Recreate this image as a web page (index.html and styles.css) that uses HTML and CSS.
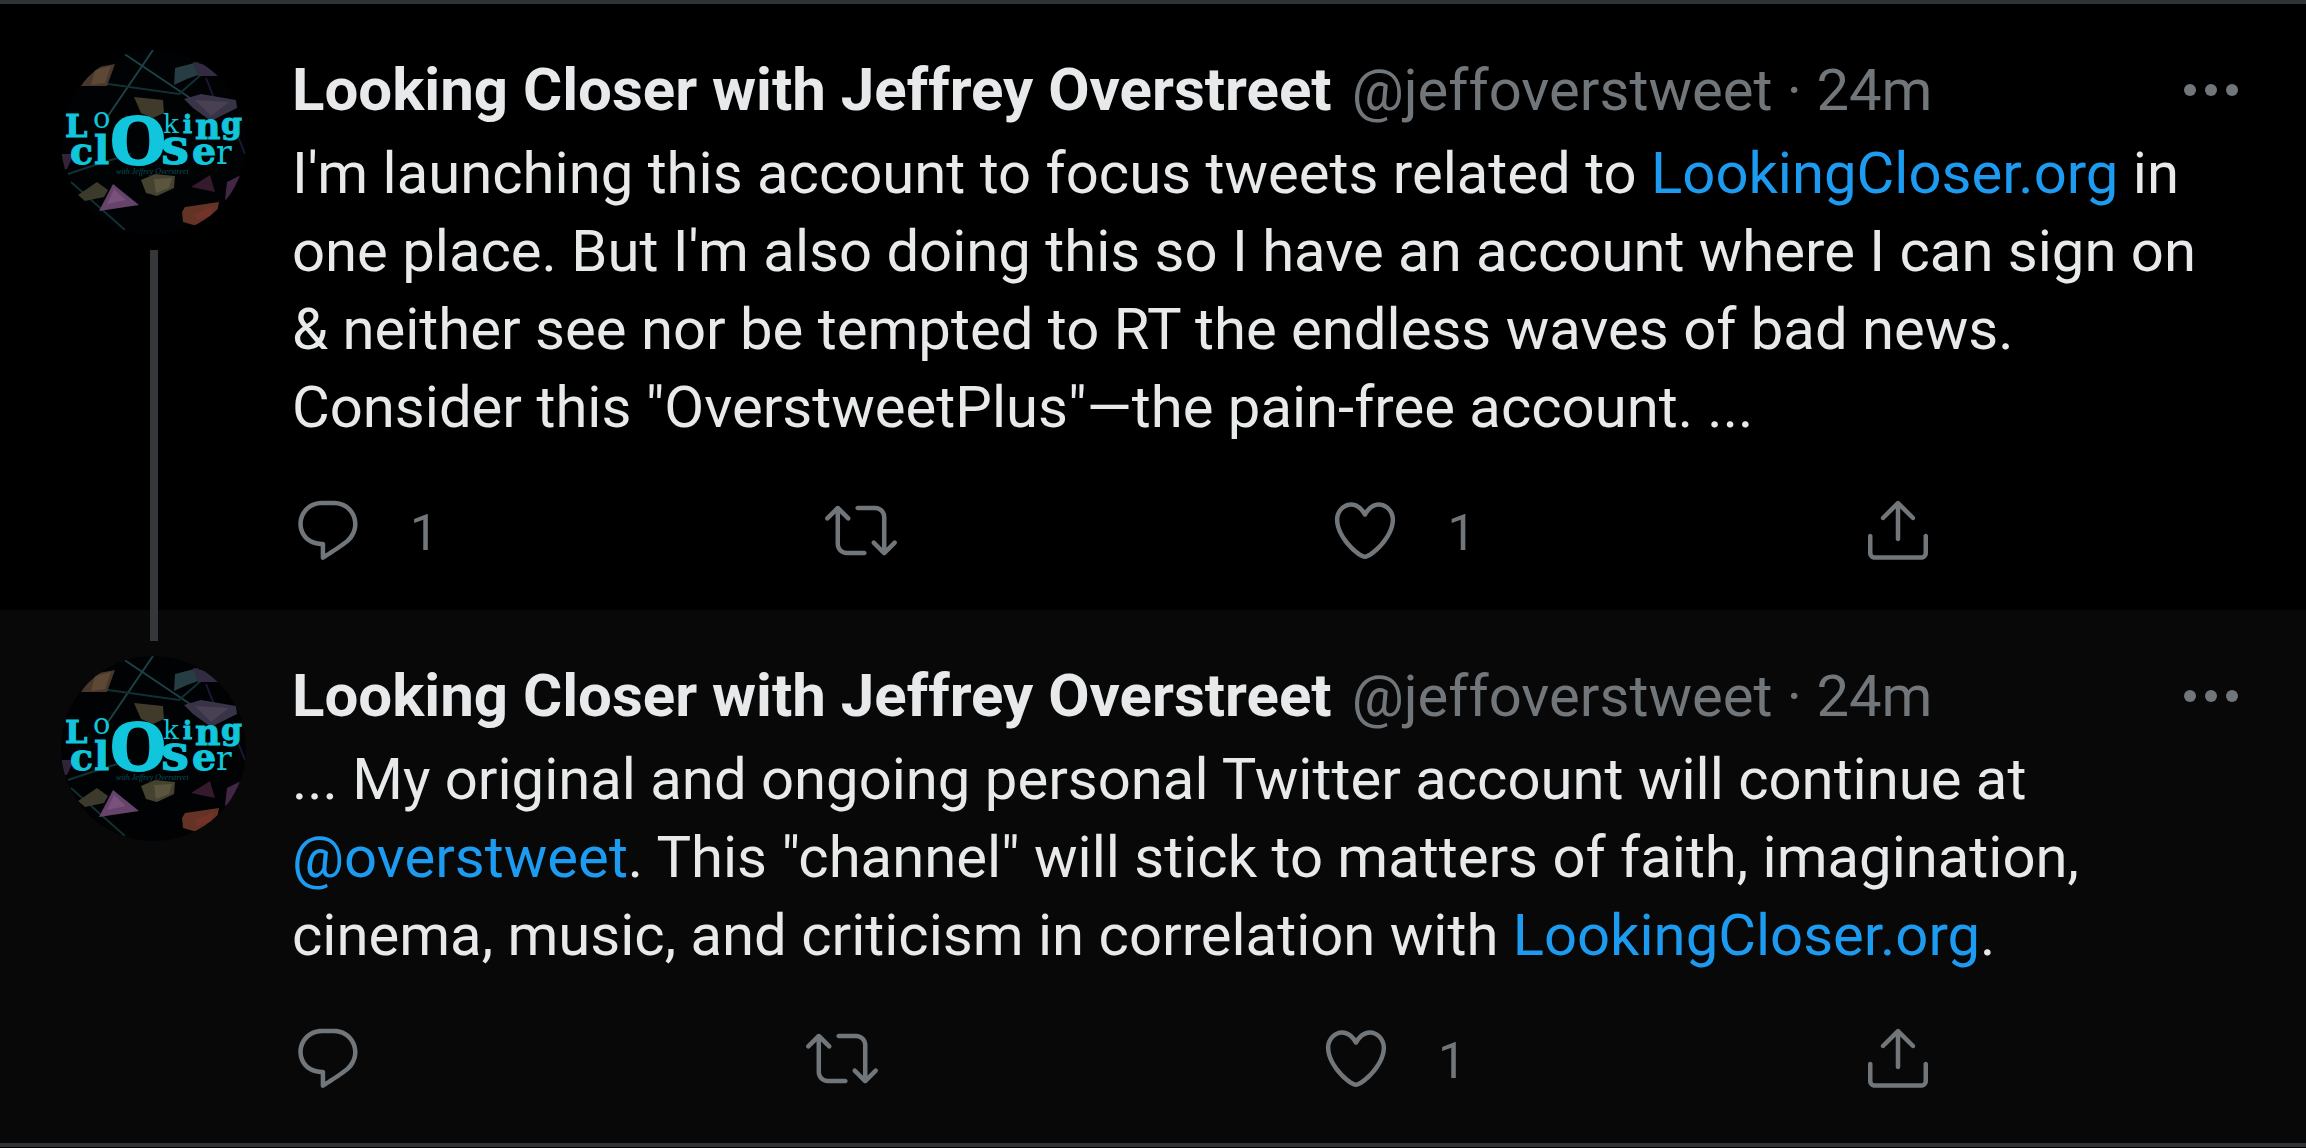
FILE: index.html
```
<!DOCTYPE html>
<html lang="en">
<head>
  <meta charset="UTF-8">
  <meta name="viewport" content="width=device-width, initial-scale=1.0">
  <title>Looking Closer with Jeffrey Overstreet</title>
  <link rel="stylesheet" href="styles.css">
</head>
<body>
  <!-- shared icons -->
  <svg class="sprite" aria-hidden="true">
    <symbol id="icon-reply" viewBox="0 0 24 24">
      <path d="M14.046 2.242l-4.148-.01h-.002c-4.374 0-7.8 3.427-7.8 7.802 0 4.098 3.186 7.206 7.465 7.37v3.828c0 .108.044.286.12.403.142.225.384.347.632.347.138 0 .277-.038.402-.118.264-.168 6.473-4.14 8.088-5.506 1.902-1.61 3.04-3.97 3.043-6.312v-.017c-.006-4.367-3.43-7.787-7.8-7.788zm3.787 12.972c-1.134.96-4.862 3.405-6.772 4.643V16.67c0-.414-.335-.75-.75-.75h-.396c-3.66 0-6.318-2.476-6.318-5.886 0-3.534 2.768-6.302 6.3-6.302l4.147.01h.002c3.532 0 6.3 2.766 6.302 6.296-.003 1.91-.942 3.844-2.514 5.176z"/>
    </symbol>
    <symbol id="icon-retweet" viewBox="0 0 24 24">
      <path d="M23.77 15.67c-.292-.293-.767-.293-1.06 0l-2.22 2.22V7.65c0-2.068-1.683-3.75-3.75-3.75h-5.85c-.414 0-.75.336-.75.75s.336.75.75.75h5.85c1.24 0 2.25 1.01 2.25 2.25v10.24l-2.22-2.22c-.293-.293-.768-.293-1.06 0s-.294.768 0 1.06l3.5 3.5c.145.147.337.22.53.22s.383-.072.53-.22l3.5-3.5c.294-.292.294-.767 0-1.06zm-10.66 3.28H7.26c-1.24 0-2.25-1.01-2.25-2.25V6.46l2.22 2.22c.148.147.34.22.532.22s.384-.073.53-.22c.293-.293.293-.768 0-1.06l-3.5-3.5c-.293-.294-.768-.294-1.06 0l-3.5 3.5c-.294.292-.294.767 0 1.06s.767.293 1.06 0l2.22-2.22V16.7c0 2.068 1.683 3.75 3.75 3.75h5.85c.414 0 .75-.336.75-.75s-.337-.75-.75-.75z"/>
    </symbol>
    <symbol id="icon-like" viewBox="0 0 24 24">
      <path d="M12 21.638h-.014C9.403 21.59 1.95 14.856 1.95 8.478c0-3.064 2.525-5.754 5.403-5.754 2.29 0 3.83 1.58 4.646 2.73.814-1.148 2.354-2.73 4.645-2.73 2.88 0 5.404 2.69 5.404 5.755 0 6.376-7.454 13.11-10.037 13.157H12zM7.354 4.225c-2.08 0-3.903 1.988-3.903 4.255 0 5.74 7.034 11.596 8.55 11.658 1.518-.062 8.55-5.917 8.55-11.658 0-2.267-1.823-4.255-3.903-4.255-2.528 0-3.94 2.936-3.952 2.965-.23.562-1.156.562-1.387 0-.014-.03-1.425-2.965-3.954-2.965z"/>
    </symbol>
    <symbol id="icon-share" viewBox="0 0 24 24">
      <path d="M17.53 7.47l-5-5c-.293-.293-.768-.293-1.06 0l-5 5c-.294.293-.294.768 0 1.06s.767.294 1.06 0l3.72-3.72V15c0 .414.336.75.75.75s.75-.336.75-.75V4.81l3.72 3.72c.146.147.338.22.53.22s.384-.072.53-.22c.293-.293.293-.767 0-1.06z"/>
      <path d="M19.708 21.944H4.292C3.028 21.944 2 20.916 2 19.652V14c0-.414.336-.75.75-.75s.75.336.75.75v5.652c0 .437.355.792.792.792h15.416c.437 0 .792-.355.792-.792V14c0-.414.336-.75.75-.75s.75.336.75.75v5.652c0 1.264-1.028 2.292-2.292 2.292z"/>
    </symbol>
    <symbol id="icon-more" viewBox="0 0 24 24">
      <circle cx="5" cy="12" r="2"/>
      <circle cx="12" cy="12" r="2"/>
      <circle cx="19" cy="12" r="2"/>
    </symbol>
    <symbol id="avatar-art" viewBox="0 0 185 185">
      <rect width="185" height="185" fill="#010203"/>
      <g fill="none" stroke="#1c4146" stroke-width="2">
        <path d="M92 0L47 66"/>
        <path d="M62 3L132 50"/>
        <path d="M40 33L118 44L150 16" stroke="#123034"/>
        <path d="M7 124L40 113L70 104" stroke="#123034"/>
        <path d="M10 132L64 180" stroke="#123034"/>
        <path d="M145 28L153 48M176 84L184 104" stroke="#171a34"/>
      </g>
      <path d="M20 36L32 18L54 14L46 36z" fill="#49372b"/>
      <path d="M34 20L50 16L44 33L30 35z" fill="#5d4735"/>
      <path d="M113 35L114 18L137 12L140 24L126 29z" fill="#263d43"/>
      <path d="M132 12L150 16L166 26L137 26z" fill="#322b42"/>
      <path d="M73 47L102 50L103 63L92 68L80 63z" fill="#403a2a"/>
      <path d="M123 49L140 44L175 50L176 58L150 71L132 58z" fill="#393348"/>
      <path d="M134 50L168 52L150 66z" fill="#494053"/>
      <path d="M0 104L13 104L6 119L0 119z" fill="#32223a"/>
      <path d="M17 145L36 132L47 140L43 147L24 151z" fill="#3c3a2b"/>
      <path d="M38 161L52 134L78 155z" fill="#66436b"/>
      <path d="M46 154L53 139L65 150z" fill="#79517b"/>
      <path d="M80 130L94 124L114 126L113 138L96 146L85 143z" fill="#45422f"/>
      <path d="M93 129L111 128L108 138L95 143z" fill="#5b553f"/>
      <path d="M130 137L149 125L154 142z" fill="#35192c"/>
      <path d="M164 150L166 132L180 125L174 145z" fill="#422645"/>
      <path d="M121 162L124 157L158 152L156 163L136 176L122 172z" fill="#633325"/>
      <path d="M134 164L153 156L150 166L136 170z" fill="#743329"/>
    </symbol>
  </svg>

  <main class="thread">
    <article class="tweet">
      <div class="side">
        <svg class="avatar" viewBox="0 0 185 185" role="img" aria-label="Looking Closer">
          <use href="#avatar-art"/>
          <text x="4" y="87" font-size="32">L</text>
          <text class="thin" x="32" y="78" font-size="29">o</text>
          <text class="round" x="49" y="114" font-size="72">O</text>
          <text class="thin" x="102" y="83" font-size="26">k</text>
          <text x="122" y="83" font-size="24">i</text>
          <text x="134" y="89" font-size="35">n</text>
          <text x="160" y="84" font-size="30">g</text>
          <text x="9" y="114" font-size="38">c</text>
          <text x="33" y="114" font-size="40">l</text>
          <text x="100" y="114" font-size="50">s</text>
          <text x="131" y="114" font-size="38">e</text>
          <text class="thin" x="155" y="114" font-size="33">r</text>
          <text class="byline" x="55" y="124" font-size="8">with Jeffrey Overstreet</text>
        </svg>
        <div class="line"></div>
      </div>
      <div class="content">
        <header class="head">
          <a class="name" href="#">Looking Closer with Jeffrey Overstreet</a>
          <span class="meta">@jeffoverstweet · 24m</span>
          <button class="more" type="button" aria-label="More"><svg class="icon"><use href="#icon-more"/></svg></button>
        </header>
        <p class="text">I'm launching this account to focus tweets related to <a href="#">LookingCloser.org</a> in<br>
          one place. But I'm also doing this so I have an account where I can sign on<br>
          &amp; neither see nor be tempted to RT the endless waves of bad news.<br>
          Consider this "OverstweetPlus"—the pain-free account. ...</p>
        <div class="actions">
          <button type="button" aria-label="Reply"><svg class="icon"><use href="#icon-reply"/></svg><span class="count">1</span></button>
          <button type="button" aria-label="Retweet"><svg class="icon"><use href="#icon-retweet"/></svg><span class="count"></span></button>
          <button type="button" aria-label="Like"><svg class="icon"><use href="#icon-like"/></svg><span class="count">1</span></button>
          <button type="button" aria-label="Share"><svg class="icon"><use href="#icon-share"/></svg></button>
        </div>
      </div>
    </article>

    <article class="tweet reply">
      <div class="side">
        <div class="line"></div>
        <svg class="avatar" viewBox="0 0 185 185" role="img" aria-label="Looking Closer">
          <use href="#avatar-art"/>
          <text x="4" y="87" font-size="32">L</text>
          <text class="thin" x="32" y="78" font-size="29">o</text>
          <text class="round" x="49" y="114" font-size="72">O</text>
          <text class="thin" x="102" y="83" font-size="26">k</text>
          <text x="122" y="83" font-size="24">i</text>
          <text x="134" y="89" font-size="35">n</text>
          <text x="160" y="84" font-size="30">g</text>
          <text x="9" y="114" font-size="38">c</text>
          <text x="33" y="114" font-size="40">l</text>
          <text x="100" y="114" font-size="50">s</text>
          <text x="131" y="114" font-size="38">e</text>
          <text class="thin" x="155" y="114" font-size="33">r</text>
          <text class="byline" x="55" y="124" font-size="8">with Jeffrey Overstreet</text>
        </svg>
      </div>
      <div class="content">
        <header class="head">
          <a class="name" href="#">Looking Closer with Jeffrey Overstreet</a>
          <span class="meta">@jeffoverstweet · 24m</span>
          <button class="more" type="button" aria-label="More"><svg class="icon"><use href="#icon-more"/></svg></button>
        </header>
        <p class="text">... My original and ongoing personal Twitter account will continue at<br>
          <a href="#">@overstweet</a>. This "channel" will stick to matters of faith, imagination,<br>
          cinema, music, and criticism in correlation with <a href="#">LookingCloser.org</a>.</p>
        <div class="actions">
          <button type="button" aria-label="Reply"><svg class="icon"><use href="#icon-reply"/></svg><span class="count"></span></button>
          <button type="button" aria-label="Retweet"><svg class="icon"><use href="#icon-retweet"/></svg><span class="count"></span></button>
          <button type="button" aria-label="Like"><svg class="icon"><use href="#icon-like"/></svg><span class="count">1</span></button>
          <button type="button" aria-label="Share"><svg class="icon"><use href="#icon-share"/></svg></button>
        </div>
      </div>
    </article>
  </main>
</body>
</html>
```
FILE: styles.css
```
* {
  box-sizing: border-box;
}
body {
  margin: 0;
  background: #000;
  color: #e7e9ea;
  font-family: Roboto, "Liberation Sans", sans-serif;
  font-size: 58px;
  line-height: 78px;
}
a {
  color: #1d9bf0;
  text-decoration: none;
}
button {
  display: flex;
  align-items: center;
  padding: 0;
  border: 0;
  background: none;
  color: #71767b;
  font: inherit;
  cursor: pointer;
}
.sprite {
  position: absolute;
  width: 0;
  height: 0;
}
.thread {
  border-top: 4px solid #2f3336;
  border-bottom: 4px solid #2f3336;
}
.tweet {
  display: flex;
  gap: 46px;
  padding: 0 59px 0 61px;
}
.reply {
  background: #080808;
}
.side {
  display: flex;
  flex-direction: column;
  align-items: center;
  gap: 15px;
  padding-top: 46px;
}
.reply .side {
  padding-top: 0;
}
.avatar {
  width: 185px;
  height: 185px;
  flex: none;
  border-radius: 50%;
  fill: #10c5dc;
  font-family: "DejaVu Serif", serif;
  font-weight: 700;
}
.avatar text {
  stroke: #10c5dc;
  stroke-width: 1px;
}
.avatar .thin {
  font-weight: 400;
  stroke: none;
}
.avatar .round {
  font-family: "Liberation Serif", serif;
  stroke-width: 3px;
}
.avatar .byline {
  fill: #07505a;
  font-family: "Liberation Serif", serif;
  font-style: italic;
  font-weight: 400;
  stroke: none;
}
.line {
  width: 8px;
  flex: 1;
  background: #36373b;
}
.reply .line {
  flex: 0 0 31px;
}
.content {
  flex: 1;
  min-width: 0;
  padding: 47px 0 44px;
}
.reply .content {
  padding-bottom: 49px;
}
.head {
  display: flex;
  gap: 20px;
  white-space: nowrap;
}
.name {
  color: #e7e9ea;
  font-size: 60px;
  font-weight: 700;
}
.meta {
  color: #71767b;
}
.more {
  height: 78px;
  margin-left: auto;
}
.icon {
  width: 72px;
  height: 72px;
  flex: none;
  fill: currentColor;
}
.text {
  margin: 5px 0 48px;
  white-space: nowrap;
}
.actions {
  display: flex;
  justify-content: space-between;
  width: 84%;
}
.count {
  padding: 6px 0 0 46px;
  font-size: 50px;
  line-height: 66px;
}
```
